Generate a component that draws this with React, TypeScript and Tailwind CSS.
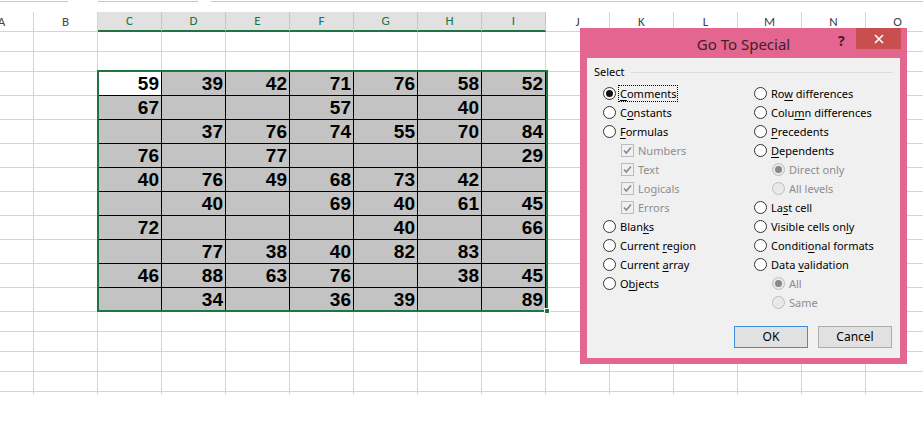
import React from "react";

const COLS = ["A", "B", "C", "D", "E", "F", "G", "H", "I", "J", "K", "L", "M", "N", "O"];
const DATA: (number | null)[][] = [
  [59, 39, 42, 71, 76, 58, 52],
  [67, null, null, 57, null, 40, null],
  [null, 37, 76, 74, 55, 70, 84],
  [76, null, 77, null, null, null, 29],
  [40, 76, 49, 68, 73, 42, null],
  [null, 40, null, 69, 40, 61, 45],
  [72, null, null, null, 40, null, 66],
  [null, 77, 38, 40, 82, 83, null],
  [46, 88, 63, 76, null, 38, 45],
  [null, 34, null, 36, 39, null, 89],
];

const isSel = (i: number) => i >= 2 && i <= 8;

function HeaderRow() {
  return (
    <div className="flex h-[20px]">
      {COLS.map((c, i) => (
        <div
          key={c}
          className={
            "shrink-0 w-[64px] flex items-center justify-center text-[13px] " +
            (i === 0 ? "ml-[-30px] " : "") +
            (isSel(i)
              ? "bg-[#e1e1e1] text-[#217346] border-r border-[#c6c6c6] border-b-2 border-b-[#217346]"
              : "bg-white text-[#444] border-r border-b border-[#d4d4d4]")
          }
          style={{ fontFamily: "Carlito, 'Noto Sans', sans-serif" }}
        >
          {c}
        </div>
      ))}
    </div>
  );
}

function EmptyRow({ h = "h-[20px]" }: { h?: string }) {
  return (
    <div className={"flex " + h}>
      {COLS.map((c, i) => (
        <div
          key={c}
          className={
            "shrink-0 w-[64px] border-r border-b border-[#d4d4d4] " + (i === 0 ? "ml-[-30px]" : "")
          }
        />
      ))}
    </div>
  );
}

function DataRow({ vals, r }: { vals: (number | null)[]; r: number }) {
  return (
    <div className="flex h-[24px]">
      {COLS.map((c, i) => {
        if (isSel(i)) {
          const v = vals[i - 2];
          const active = r === 0 && i === 2;
          return (
            <div
              key={c}
              className={
                "shrink-0 w-[64px] border-r border-b border-black flex items-center justify-end pr-[2px] text-[19px] font-bold text-black leading-none " +
                (active ? "bg-white" : "bg-[#c3c3c3]")
              }
              style={{ fontFamily: "'Liberation Sans', Arial, sans-serif" }}
            >
              {v ?? ""}
            </div>
          );
        }
        return (
          <div
            key={c}
            className={
              "shrink-0 w-[64px] border-r border-b border-[#d4d4d4] " + (i === 0 ? "ml-[-30px]" : "")
            }
          />
        );
      })}
    </div>
  );
}

function Label({ text, u }: { text: string; u?: number }) {
  if (u === undefined) return <>{text}</>;
  return (
    <>
      {text.slice(0, u)}
      <span className="underline underline-offset-2">{text[u]}</span>
      {text.slice(u + 1)}
    </>
  );
}

function Radio({ checked, disabled }: { checked?: boolean; disabled?: boolean }) {
  return (
    <span
      className={
        "shrink-0 w-[13px] h-[13px] rounded-full border flex items-center justify-center " +
        (disabled ? "border-[#bcbcbc] bg-[#e9e9e9]" : "border-[#333] bg-white")
      }
    >
      {checked && (
        <span className={"w-[7px] h-[7px] rounded-full " + (disabled ? "bg-[#888]" : "bg-[#111]")} />
      )}
    </span>
  );
}

function Check() {
  return (
    <span className="shrink-0 w-[13px] h-[13px] border border-[#bcbcbc] bg-[#f0f0f0] flex items-center justify-center">
      <svg width="11" height="11" viewBox="0 0 11 11">
        <path d="M2 5.5 L4.3 8 L9 2.5" fill="none" stroke="#8a8a8a" strokeWidth="1.6" />
      </svg>
    </span>
  );
}

type Item = {
  t: string;
  u?: number;
  kind: "radio" | "check" | "subradio";
  checked?: boolean;
  focus?: boolean;
};

const LEFT: Item[] = [
  { t: "Comments", u: 0, kind: "radio", checked: true, focus: true },
  { t: "Constants", u: 1, kind: "radio" },
  { t: "Formulas", u: 0, kind: "radio" },
  { t: "Numbers", kind: "check" },
  { t: "Text", kind: "check" },
  { t: "Logicals", kind: "check" },
  { t: "Errors", kind: "check" },
  { t: "Blanks", u: 4, kind: "radio" },
  { t: "Current region", u: 8, kind: "radio" },
  { t: "Current array", u: 8, kind: "radio" },
  { t: "Objects", u: 1, kind: "radio" },
];

const RIGHT: Item[] = [
  { t: "Row differences", u: 2, kind: "radio" },
  { t: "Column differences", u: 4, kind: "radio" },
  { t: "Precedents", u: 0, kind: "radio" },
  { t: "Dependents", u: 0, kind: "radio" },
  { t: "Direct only", kind: "subradio", checked: true },
  { t: "All levels", kind: "subradio" },
  { t: "Last cell", u: 2, kind: "radio" },
  { t: "Visible cells only", u: 16, kind: "radio" },
  { t: "Conditional formats", u: 7, kind: "radio" },
  { t: "Data validation", u: 5, kind: "radio" },
  { t: "All", kind: "subradio", checked: true },
  { t: "Same", kind: "subradio" },
];

function Row({ it }: { it: Item }) {
  const sub = it.kind !== "radio";
  return (
    <div className={"h-[19px] flex items-center " + (sub ? "pl-[18px]" : "")}>
      {it.kind === "check" ? <Check /> : <Radio checked={it.checked} disabled={it.kind === "subradio"} />}
      <span
        className={
          "whitespace-nowrap leading-[15px] " +
          (sub ? "text-[#8d8d8d] " : "text-black ") +
          (it.focus ? "border border-dotted border-black px-[1px] ml-[2px]" : "px-[1px] ml-[3px]")
        }
      >
        <Label text={it.t} u={it.u} />
      </span>
    </div>
  );
}

function Dialog() {
  return (
    <div
      className="absolute left-[580px] top-[28px] w-[327px] h-[336px] bg-[#e4658f] flex flex-col"
      style={{ fontFamily: "'Noto Sans', 'Open Sans', sans-serif" }}
    >
      <div className="h-[30px] flex items-start relative">
        <div className="flex-1 text-center text-[15px] text-[#3a2230] pt-[5px]">Go To Special</div>
        <div className="absolute left-[258px] top-[2px] text-[14px] font-bold text-[#4a1a2c]">?</div>
        <div className="absolute left-[276px] top-0 w-[45px] h-[21px] bg-[#c74f50] flex items-center justify-center">
          <svg width="10" height="10" viewBox="0 0 10 10">
            <path d="M1 1 L9 9 M9 1 L1 9" stroke="white" strokeWidth="1.6" />
          </svg>
        </div>
      </div>
      <div className="mx-[7px] mb-[6px] flex-1 bg-[#f0f0f0] flex flex-col text-[11px] text-black">
        <div className="flex items-center pl-[7px] pr-[7px] h-[26px] pt-[2px]">
          <span>Select</span>
          <div className="flex-1 ml-[6px] h-px bg-[#dcdcdc]" />
        </div>
        <div className="flex pl-[16px]">
          <div className="w-[151px] flex flex-col">
            {LEFT.map((it) => (
              <Row key={it.t} it={it} />
            ))}
          </div>
          <div className="flex flex-col">
            {RIGHT.map((it) => (
              <Row key={it.t} it={it} />
            ))}
          </div>
        </div>
        <div className="mt-auto flex justify-end gap-[10px] pr-[8px] pb-[10px] text-[12px]">
          <div className="w-[74px] h-[22px] bg-[#e1e1e1] border border-[#3c8fe0] flex items-center justify-center">
            OK
          </div>
          <div className="w-[74px] h-[22px] bg-[#e1e1e1] border border-[#adadad] flex items-center justify-center">
            Cancel
          </div>
        </div>
      </div>
    </div>
  );
}

export default function App() {
  return (
    <div className="relative w-[923px] h-[428px] bg-white overflow-hidden">
      <div className="flex h-[2px]">
        <div className="w-[68px] border-b border-[#c6c6c6]" />
        <div className="w-[100px] ml-[30px] border-b border-[#c6c6c6]" />
        <div className="flex-1 ml-[13px] border-b border-[#c6c6c6]" />
      </div>
      <div className="h-[10px]" />
      <div className="flex flex-col">
        <HeaderRow />
        <EmptyRow />
        <EmptyRow />
        {DATA.map((vals, r) => (
          <DataRow key={r} vals={vals} r={r} />
        ))}
        <EmptyRow />
        <EmptyRow />
        <EmptyRow />
        <EmptyRow />
        <div className="flex h-[2px]">
          {COLS.map((c, i) => (
            <div key={c} className={"shrink-0 w-[64px] border-r border-[#d4d4d4] " + (i === 0 ? "ml-[-30px]" : "")} />
          ))}
        </div>
      </div>
      <div className="absolute left-[97px] top-[70px] w-[451px] h-[242px] border-2 border-[#217346] pointer-events-none" />
      <div className="absolute left-[544px] top-[308px] w-[6px] h-[6px] bg-[#217346] border border-white" />
      <Dialog />
    </div>
  );
}
